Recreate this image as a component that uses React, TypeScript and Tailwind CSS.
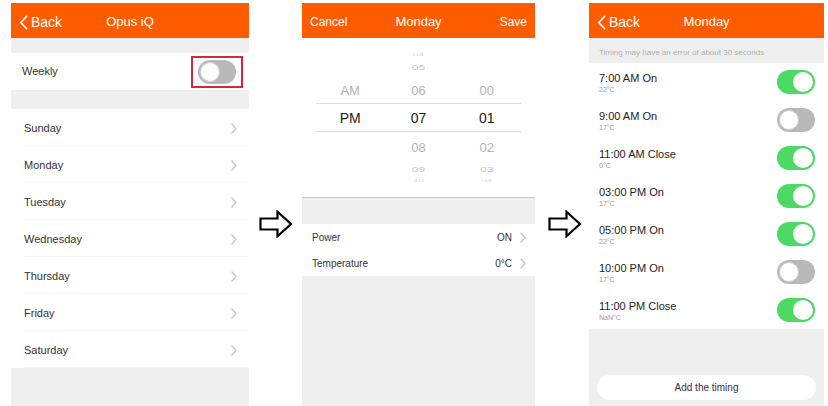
import React from 'react';

const days = ['Sunday', 'Monday', 'Tuesday', 'Wednesday', 'Thursday', 'Friday', 'Saturday'];

const timings = [
  { time: '7:00 AM On', temp: '22°C', on: true },
  { time: '9:00 AM On', temp: '17°C', on: false },
  { time: '11:00 AM Close', temp: '0°C', on: true },
  { time: '03:00 PM On', temp: '17°C', on: true },
  { time: '05:00 PM On', temp: '22°C', on: true },
  { time: '10:00 PM On', temp: '17°C', on: false },
  { time: '11:00 PM Close', temp: 'NaN°C', on: true },
];

function ChevronLeft() {
  return (
    <svg width="9" height="15" viewBox="0 0 9 15" fill="none">
      <path d="M7.5 1.5 L1.8 7.5 L7.5 13.5" stroke="white" strokeWidth="1.8" strokeLinecap="round" strokeLinejoin="round" />
    </svg>
  );
}

function ChevronRight() {
  return (
    <svg width="6" height="11" viewBox="0 0 6 11" fill="none">
      <path d="M1 1 L5 5.5 L1 10" stroke="#c4c4c8" strokeWidth="1.3" strokeLinecap="round" strokeLinejoin="round" />
    </svg>
  );
}

function Toggle({ on }: { on: boolean }) {
  return (
    <div
      className={`w-[38px] h-[24px] rounded-full p-[2px] flex ${on ? 'bg-[#4cd964] justify-end' : 'bg-[#b9b9b9] justify-start'}`}
    >
      <div className={`w-[20px] h-[20px] rounded-full bg-white ${on ? '' : 'border border-[#d0d0d0]'}`} />
    </div>
  );
}

function Arrow() {
  return (
    <svg width="34" height="28" viewBox="0 0 34 28" fill="none">
      <path d="M1.5 8.5 H18.5 V1.8 L32 14 L18.5 26.2 V19.5 H1.5 Z" fill="white" stroke="black" strokeWidth="2.2" strokeLinejoin="miter" />
    </svg>
  );
}

function Header({ left, title, right }: { left: React.ReactNode; title: string; right?: React.ReactNode }) {
  return (
    <div className="h-[35px] bg-[#ff5c00] flex items-center justify-between text-white text-[13px] px-[8px] pt-[3px] relative">
      <div className="flex items-center gap-[3px]">{left}</div>
      <div className="absolute left-0 right-0 text-center pointer-events-none">{title}</div>
      <div>{right}</div>
    </div>
  );
}

function WeeklyPanel() {
  return (
    <div className="w-[238px] flex flex-col">
      <Header
        left={
          <>
            <ChevronLeft />
            <span className="text-[14px]">Back</span>
          </>
        }
        title="Opus iQ"
      />
      <div className="h-[15px] bg-[#efefef]" />
      <div className="h-[37px] bg-white flex items-center justify-between pl-[11px] pr-[6px]">
        <span className="text-[11px] text-[#333]">Weekly</span>
        <div className="border-2 border-[#d0283e] px-[5px] py-[2px]">
          <Toggle on={false} />
        </div>
      </div>
      <div className="h-[19px] bg-[#efefef]" />
      {days.map((d) => (
        <div key={d} className="h-[37px] bg-white pl-[13px] flex">
          <div className="flex-1 flex items-center justify-between pr-[12px] pt-[2px] border-b border-[#f6f6f6]">
            <span className="text-[11px] text-[#333]">{d}</span>
            <ChevronRight />
          </div>
        </div>
      ))}
      <div className="flex-1 bg-[#efefef]" />
    </div>
  );
}

function Cell({ h, children, cls }: { h: string; children?: React.ReactNode; cls?: string }) {
  return <div className={`${h} flex items-center justify-center leading-none ${cls ?? ''}`}>{children}</div>;
}

function PickerPanel() {
  return (
    <div className="w-[233px] flex flex-col">
      <Header left={<span className="text-[12px]">Cancel</span>} title="Monday" right={<span className="text-[12px]">Save</span>} />
      <div className="h-[160px] bg-white border-b border-[#c8c8c8] px-[14px] flex flex-col">
        <div className="h-[65px] grid grid-cols-3">
          <div className="flex flex-col pt-[42px]">
            <Cell h="h-[20px]" cls="text-[13px] text-[#b3b3b3]">AM</Cell>
          </div>
          <div className="flex flex-col pt-[13px]">
            <Cell h="h-[8px]" cls="text-[10px] text-[#d8d8d8] scale-y-[0.35]">04</Cell>
            <Cell h="h-[14px] mt-[1px]" cls="text-[12px] text-[#c4c4c4] scale-y-[0.65]">05</Cell>
            <Cell h="h-[20px] mt-[6px]" cls="text-[13px] text-[#b3b3b3]">06</Cell>
          </div>
          <div className="flex flex-col pt-[42px]">
            <Cell h="h-[20px]" cls="text-[13px] text-[#b3b3b3]">00</Cell>
          </div>
        </div>
        <div className="h-[30px] grid grid-cols-3 border-y border-[#dedede] text-[14px] text-[#1a1a1a]">
          <Cell h="h-full">PM</Cell>
          <Cell h="h-full">07</Cell>
          <Cell h="h-full">01</Cell>
        </div>
        <div className="h-[65px] grid grid-cols-3">
          <div />
          <div className="flex flex-col pt-[5px]">
            <Cell h="h-[20px]" cls="text-[13px] text-[#b3b3b3]">08</Cell>
            <Cell h="h-[14px] mt-[5px]" cls="text-[12px] text-[#c4c4c4] scale-y-[0.65]">09</Cell>
            <Cell h="h-[8px] mt-[1px]" cls="text-[10px] text-[#d8d8d8] scale-y-[0.35]">10</Cell>
          </div>
          <div className="flex flex-col pt-[5px]">
            <Cell h="h-[20px]" cls="text-[13px] text-[#b3b3b3]">02</Cell>
            <Cell h="h-[14px] mt-[5px]" cls="text-[12px] text-[#c4c4c4] scale-y-[0.65]">03</Cell>
            <Cell h="h-[8px] mt-[1px]" cls="text-[10px] text-[#d8d8d8] scale-y-[0.35]">04</Cell>
          </div>
        </div>
      </div>
      <div className="h-[26px] bg-[#efefef]" />
      {[
        ['Power', 'ON'],
        ['Temperature', '0°C'],
      ].map(([k, v]) => (
        <div key={k} className="h-[26px] bg-white flex items-center justify-between pl-[10px] pr-[9px] text-[10px] text-[#333]">
          <span>{k}</span>
          <span className="flex items-center gap-[8px]">
            {v}
            <ChevronRight />
          </span>
        </div>
      ))}
      <div className="flex-1 bg-[#efefef]" />
    </div>
  );
}

function TimingPanel() {
  return (
    <div className="w-[235px] flex flex-col">
      <Header
        left={
          <>
            <ChevronLeft />
            <span className="text-[14px]">Back</span>
          </>
        }
        title="Monday"
      />
      <div className="h-[25px] bg-[#efefef] flex items-center pl-[10px] pt-[5px] text-[8px] text-[#b0b0b0]">
        Timing may have an error of about 30 seconds
      </div>
      {timings.map((t) => (
        <div key={t.time} className="h-[38px] bg-white flex items-center justify-between pl-[10px] pr-[9px]">
          <div className="flex flex-col pt-[2px]">
            <span className="text-[11px] text-[#222] leading-[13px]">{t.time}</span>
            <span className="text-[7px] text-[#999] leading-[9px]">{t.temp}</span>
          </div>
          <Toggle on={t.on} />
        </div>
      ))}
      <div className="flex-1 bg-[#efefef] flex flex-col justify-end px-[8px] pb-[6px]">
        <div className="h-[25px] rounded-full bg-white flex items-center justify-center text-[10px] text-[#333]">
          Add the timing
        </div>
      </div>
    </div>
  );
}

export default function App() {
  return (
    <div className="w-[828px] h-[406px] bg-white flex pt-[3px] pl-[11px] font-['Liberation_Sans',Arial,sans-serif] overflow-hidden">
      <WeeklyPanel />
      <div className="w-[53px] flex justify-center pt-[207px]">
        <div>
          <Arrow />
        </div>
      </div>
      <PickerPanel />
      <div className="w-[54px] flex justify-center pt-[207px] pl-[6px]">
        <div>
          <Arrow />
        </div>
      </div>
      <TimingPanel />
    </div>
  );
}
